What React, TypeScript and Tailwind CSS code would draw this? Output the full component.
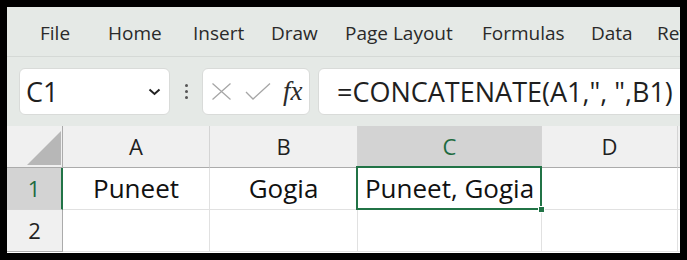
import React from "react";

const font = { fontFamily: '"Open Sans", "Noto Sans", sans-serif' };

function Tabs() {
  return (
    <div className="h-[50px] shrink-0 bg-[#e5e9e6] flex items-center pl-[33px] pt-[4px] overflow-hidden whitespace-nowrap border-b border-[#d5d9d6] text-[19px] text-[#2a2a2a] leading-none">
      <span className="w-[68px] shrink-0">File</span>
      <span className="w-[85px] shrink-0">Home</span>
      <span className="w-[78px] shrink-0">Insert</span>
      <span className="w-[74px] shrink-0">Draw</span>
      <span className="w-[137px] shrink-0">Page Layout</span>
      <span className="w-[109px] shrink-0">Formulas</span>
      <span className="w-[66px] shrink-0">Data</span>
      <span className="shrink-0">Review</span>
    </div>
  );
}

function Toolbar() {
  return (
    <div className="h-[69px] shrink-0 bg-[#e5e9e6] flex items-start pt-[11px] pl-[12px] overflow-hidden">
      <div className="w-[151px] h-[47px] shrink-0 bg-white border border-[#d9dbd9] rounded-[6px] flex items-center justify-between pl-[6px] pr-[8px]">
        <span className="text-[27px] leading-none text-[#1f1f1f]">C1</span>
        <svg width="13" height="8" viewBox="0 0 13 8">
          <path d="M1.5 1.5 L6.5 6 L11.5 1.5" fill="none" stroke="#222" strokeWidth="2" />
        </svg>
      </div>
      <div className="w-[32px] h-[47px] shrink-0 flex flex-col items-center justify-center gap-[3px]">
        <span className="w-[3px] h-[3px] rounded-full bg-[#555]" />
        <span className="w-[3px] h-[3px] rounded-full bg-[#555]" />
        <span className="w-[3px] h-[3px] rounded-full bg-[#555]" />
      </div>
      <div className="w-[108px] h-[47px] shrink-0 bg-white border border-[#d9dbd9] rounded-[6px] flex items-center pl-[8px]">
        <svg width="21" height="19" viewBox="0 0 21 19" className="shrink-0">
          <path d="M1.5 1.5 L19.5 17.5 M19.5 1.5 L1.5 17.5" stroke="#a6a6a6" strokeWidth="1.3" fill="none" />
        </svg>
        <svg width="26" height="19" viewBox="0 0 26 19" className="ml-[13px] shrink-0">
          <path d="M1 10 L8 17 L25 1.5" stroke="#a6a6a6" strokeWidth="1.3" fill="none" />
        </svg>
        <span
          className="ml-[12px] text-[27px] leading-none italic text-[#2b2b2b]"
          style={{ fontFamily: '"Liberation Serif", "DejaVu Serif", serif' }}
        >
          fx
        </span>
      </div>
      <div className="ml-[8px] w-[420px] h-[47px] shrink-0 bg-white border border-[#d9dbd9] rounded-[6px] flex items-center pl-[18px] whitespace-nowrap">
        <span className="text-[27px] leading-none text-[#1f1f1f]">=CONCATENATE(A1,", ",B1)</span>
      </div>
    </div>
  );
}

function Grid() {
  const green = "#217346";
  return (
    <div className="grid grid-cols-[56px_147px_148px_184px_136px_1fr] grid-rows-[42px_42px_42px] bg-white">
      {/* header row */}
      <div className="bg-[#f0f0f0] border-r border-b border-[#ababab] relative">
        <svg width="34" height="34" viewBox="0 0 34 34" className="absolute left-[20px] top-[5px]">
          <path d="M34 0 L34 34 L0 34 Z" fill="#b7b7b7" />
        </svg>
      </div>
      {["A", "B"].map((c) => (
        <div key={c} className="bg-[#f0f0f0] border-r border-[#d4d4d4] border-b border-b-[#ababab] flex items-center justify-center text-[22px] text-[#1f1f1f]">
          {c}
        </div>
      ))}
      <div className="bg-[#d3d3d3] border-r border-[#d4d4d4] border-b-2 border-b-[#217346] flex items-center justify-center text-[22px] text-[#1e6b40]">
        C
      </div>
      <div className="bg-[#f0f0f0] border-r border-[#d4d4d4] border-b border-b-[#ababab] flex items-center justify-center text-[22px] text-[#1f1f1f]">
        D
      </div>
      <div className="bg-[#f0f0f0] border-b border-[#ababab]" />

      {/* row 1 */}
      <div className="bg-[#d3d3d3] border-r-2 border-r-[#217346] border-b border-b-[#d4d4d4] flex items-center justify-center text-[22px] text-[#1e6b40]">
        1
      </div>
      <div className="border-r border-b border-[#e1e1e1] flex items-center justify-center text-[26px] text-[#111]">
        Puneet
      </div>
      <div className="border-r border-b border-[#e1e1e1] flex items-center justify-center text-[26px] text-[#111]">
        Gogia
      </div>
      <div className="relative border-r border-b border-[#e1e1e1] flex items-center justify-center text-[26px] text-[#111] whitespace-nowrap">
        Puneet, Gogia
        <div className="absolute -left-[2px] -top-[2px] -right-[1px] -bottom-[1px] border-2" style={{ borderColor: green }} />
        <div className="absolute -right-[4px] -bottom-[4px] w-[7px] h-[7px] bg-[#217346] border border-white" />
      </div>
      <div className="border-r border-b border-[#e1e1e1]" />
      <div className="border-b border-[#e1e1e1]" />

      {/* row 2 */}
      <div className="bg-[#f0f0f0] border-r border-r-[#ababab] border-b border-b-[#ababab] flex items-center justify-center text-[22px] text-[#1f1f1f]">
        2
      </div>
      <div className="border-r border-b border-[#e1e1e1]" />
      <div className="border-r border-b border-[#e1e1e1]" />
      <div className="border-r border-b border-[#e1e1e1]" />
      <div className="border-r border-b border-[#e1e1e1]" />
      <div className="border-b border-[#e1e1e1]" />
    </div>
  );
}

export default function App() {
  return (
    <div className="w-[687px] h-[260px] bg-black p-[7px]" style={font}>
      <div className="w-[673px] h-[246px] overflow-hidden flex flex-col bg-white">
        <Tabs />
        <Toolbar />
        <Grid />
      </div>
    </div>
  );
}
